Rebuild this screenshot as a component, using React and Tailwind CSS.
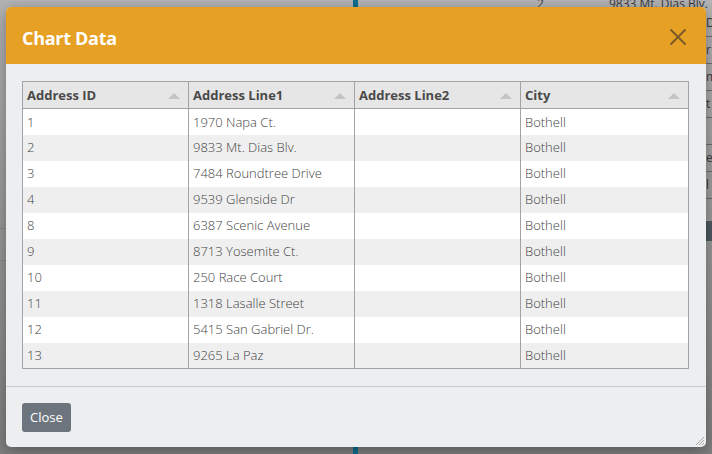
import React from 'react';

const rows = [
  ['1', '1970 Napa Ct.', '', 'Bothell'],
  ['2', '9833 Mt. Dias Blv.', '', 'Bothell'],
  ['3', '7484 Roundtree Drive', '', 'Bothell'],
  ['4', '9539 Glenside Dr', '', 'Bothell'],
  ['8', '6387 Scenic Avenue', '', 'Bothell'],
  ['9', '8713 Yosemite Ct.', '', 'Bothell'],
  ['10', '250 Race Court', '', 'Bothell'],
  ['11', '1318 Lasalle Street', '', 'Bothell'],
  ['12', '5415 San Gabriel Dr.', '', 'Bothell'],
  ['13', '9265 La Paz', '', 'Bothell'],
];

const headers = ['Address ID', 'Address Line1', 'Address Line2', 'City'];

const SortArrow = () => (
  <svg width="12" height="7" viewBox="0 0 12 7" className="shrink-0">
    <path d="M0 7 L6 1 L12 7 Z" fill="#c4c4c4" />
  </svg>
);

export default function App() {
  return (
    <div
      className="relative w-[712px] h-[454px] overflow-hidden bg-gradient-to-b from-[#b4b4b4] to-[#808080]"
      style={{ fontFamily: '"Open Sans", "Noto Sans", sans-serif' }}
    >
      {/* page behind the overlay */}
      <div className="absolute left-[353px] top-0 w-[5px] h-full bg-[#0f6f90]" />
      <div className="absolute left-[0px] top-[228px] w-[6px] border-t border-[#8a8a8a]" />
      <div className="absolute left-[0px] top-[260px] w-[6px] border-t border-[#8a8a8a]" />
      <div className="absolute right-0 top-0 w-[180px] h-[220px] text-[12px] text-[#3a3a3a]">
        <div className="flex h-[10px] items-end leading-none">
          <span className="ml-[5px]">2</span>
          <span className="ml-auto mr-[4px]">9833 Mt. Dias Blv.</span>
        </div>
      </div>
      <div className="absolute left-[706px] top-[10px] w-[6px] flex flex-col text-[12px] text-[#3a3a3a] leading-[26px]">
        <div className="border-b border-[#6e6e6e]">D</div>
        <div className="border-b border-[#6e6e6e]">r</div>
        <div className="border-b border-[#6e6e6e]">m</div>
        <div className="border-b border-[#6e6e6e]">t</div>
        <div className="border-b border-[#6e6e6e]">&nbsp;</div>
        <div className="border-b border-[#6e6e6e]">e</div>
        <div className="border-b border-[#6e6e6e]">l</div>
        <div className="h-[22px]" />
        <div className="h-[20px] bg-[#4d5a60]" />
      </div>

      {/* dialog */}
      <div className="absolute left-[6px] top-[7px] w-[700px] h-[440px] rounded-[5px] bg-[#edeeef] shadow-[0_4px_16px_rgba(0,0,0,0.35)] overflow-hidden flex flex-col">
        <div className="h-[57px] bg-[#e6a023] flex items-center justify-between pl-[16px] pr-[19px] pt-[5px]">
          <h1 className="text-white font-bold text-[18px] tracking-[-0.3px]">Chart Data</h1>
          <svg width="18" height="18" viewBox="0 0 18 18" className="-mt-[3px]">
            <path d="M1.5 1.5 L16.5 16.5 M16.5 1.5 L1.5 16.5" stroke="#76592a" strokeWidth="1.8" />
          </svg>
        </div>

        <div className="px-[16px] pt-[17px] pb-[17px] border-b border-[#c9c9c9]">
          <table className="w-[667px] border border-[#a3a3a3] border-collapse table-fixed text-[13px]">
            <colgroup>
              <col className="w-[166px]" />
              <col className="w-[166px]" />
              <col className="w-[166px]" />
              <col />
            </colgroup>
            <thead>
              <tr className="bg-[#e6e6e6] h-[27px]">
                {headers.map((h) => (
                  <th key={h} className="border-x border-[#a3a3a3] border-b px-[4px] pt-[1px] text-left font-bold text-[#4a4a4a]">
                    <div className="flex items-center justify-between pr-[4px]">
                      <span>{h}</span>
                      <SortArrow />
                    </div>
                  </th>
                ))}
              </tr>
            </thead>
            <tbody>
              {rows.map((r, i) => (
                <tr key={i} className={`h-[26px] ${i % 2 === 0 ? 'bg-white' : 'bg-[#efefef]'}`}>
                  {r.map((c, j) => (
                    <td key={j} className="border-x border-[#a3a3a3] px-[4px] pt-[1px] text-[#444444] font-light whitespace-nowrap">
                      {c}
                    </td>
                  ))}
                </tr>
              ))}
            </tbody>
          </table>
        </div>

        <div className="flex-1 px-[16px] pt-[16px] relative">
          <button className="h-[29px] px-[8px] rounded-[3px] bg-[#6c757d] text-white text-[13px]">
            Close
          </button>
          <svg width="12" height="12" viewBox="0 0 12 12" className="absolute right-[1px] bottom-[1px]">
            <path d="M11 3 L3 11 M11 6 L6 11 M11 9 L9 11" stroke="#a8a8a8" strokeWidth="1" />
          </svg>
        </div>
      </div>
    </div>
  );
}
